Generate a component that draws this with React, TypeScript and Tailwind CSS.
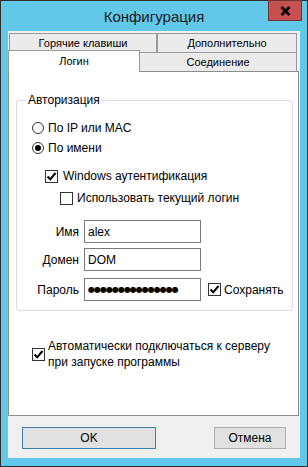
import React from "react";

const font = { fontFamily: '"Liberation Sans", Arial, sans-serif' };

function Check({ checked }: { checked: boolean }) {
  return (
    <span className="w-[13px] h-[13px] border border-[#333333] bg-white flex items-center justify-center shrink-0">
      {checked && (
        <svg width="11" height="11" viewBox="0 0 11 11">
          <path d="M1.5 5.5 L4.2 8.3 L9.5 2" fill="none" stroke="#000" strokeWidth="2" />
        </svg>
      )}
    </span>
  );
}

function Radio({ checked }: { checked: boolean }) {
  return (
    <span className="w-[12px] h-[12px] rounded-full border border-[#333333] bg-white flex items-center justify-center shrink-0">
      {checked && <span className="w-[6px] h-[6px] rounded-full bg-black" />}
    </span>
  );
}

export default function App() {
  return (
    <div
      className="w-[308px] h-[467px] bg-[#62c8ea] border border-[#2e2e2e] flex flex-col text-black"
      style={font}
    >
      <div className="h-[30px] relative flex items-center justify-center">
        <span className="text-[15px] leading-[18px] text-[#1a1a1a] mt-[1px]">Конфигурация</span>
        <div className="absolute top-[-1px] right-[5px] w-[34px] h-[21px] bg-[#c75050] border border-[#6e3434] flex items-center justify-center">
          <svg width="11" height="10" viewBox="0 0 11 10">
            <path d="M1.5 1 L9.5 9 M9.5 1 L1.5 9" stroke="#000" strokeWidth="2.6" />
          </svg>
        </div>
      </div>
      <div className="mx-[7px] mb-[8px] flex-1 bg-[#f0f0f0] flex flex-col">
        {/* tabs row 1 */}
        <div className="flex pt-[2px] pl-[1px]">
          <div className="w-[148px] h-[19px] bg-[#ebebeb] border border-[#9a9a9a] border-b-0 flex items-center justify-center text-[11px] leading-[13px]">
            Горячие клавиши
          </div>
          <div className="w-[140px] h-[19px] bg-[#ebebeb] border border-[#9a9a9a] border-b-0 flex items-center justify-center text-[11px] leading-[13px]">
            Дополнительно
          </div>
        </div>
        {/* tabs row 2 */}
        <div className="flex items-start -mt-[2px]">
          <div className="relative z-10 w-[132px] h-[22px] bg-white border border-[#9a9a9a] border-b-0 flex items-start justify-center pt-[4px] text-[11px] leading-[13px]">
            Логин
          </div>
          <div className="mt-[2px] w-[157px] h-[19px] bg-[#ebebeb] border border-[#9a9a9a] border-l-0 border-b-0 flex items-center justify-center text-[11px] leading-[13px]">
            Соединение
          </div>
        </div>
        {/* panel */}
        <div className="-mt-[1px] w-[291px] h-[345px] bg-white border border-[#8c8c8c] flex flex-col text-[12px] leading-[16px]">
          <fieldset className="mt-[20px] ml-[7px] w-[277px] border border-[#dcdcdc] rounded-[3px] pb-[9px]">
            <legend className="ml-[9px] px-[2px] text-[12px] leading-[16px]">Авторизация</legend>
            <div className="flex flex-col">
              <div className="mt-[12px] ml-[15px] flex items-center gap-[4px] h-[16px]">
                <Radio checked={false} />
                <span>По IP или MAC</span>
              </div>
              <div className="mt-[4px] ml-[15px] flex items-center gap-[4px] h-[16px]">
                <Radio checked={true} />
                <span>По имени</span>
              </div>
              <div className="mt-[12px] ml-[28px] flex items-center gap-[5px] h-[16px]">
                <Check checked={true} />
                <span>Windows аутентификация</span>
              </div>
              <div className="mt-[6px] ml-[43px] flex items-center gap-[4px] h-[16px]">
                <Check checked={false} />
                <span>Использовать текущий логин</span>
              </div>
              <div className="mt-[14px] flex items-center h-[23px]">
                <span className="w-[62px] text-right">Имя</span>
                <div className="ml-[5px] w-[117px] h-[23px] border border-[#7a7a7a] bg-white flex items-center pl-[3px]">alex</div>
              </div>
              <div className="mt-[5px] flex items-center h-[23px]">
                <span className="w-[62px] text-right">Домен</span>
                <div className="ml-[5px] w-[117px] h-[23px] border border-[#7a7a7a] bg-white flex items-center pl-[3px]">DOM</div>
              </div>
              <div className="mt-[7px] flex items-center h-[23px]">
                <span className="w-[62px] text-right">Пароль</span>
                <div className="ml-[5px] w-[117px] shrink-0 h-[23px] border border-[#7a7a7a] bg-white flex items-center pl-[3px] overflow-hidden">
                  <span className="text-[8px] leading-[10px] tracking-[-1px] whitespace-nowrap" style={{ fontFamily: '"DejaVu Sans", sans-serif' }}>
                    ●●●●●●●●●●●●●●●
                  </span>
                </div>
                <div className="ml-[7px] flex items-center gap-[3px]">
                  <Check checked={true} />
                  <span>Сохранять</span>
                </div>
              </div>
            </div>
          </fieldset>
          <div className="mt-[27px] ml-[23px] flex items-center gap-[3px]">
            <Check checked={true} />
            <span>
              Автоматически подключаться к серверу
              <br />
              при запуске программы
            </span>
          </div>
        </div>
        {/* buttons */}
        <div className="flex justify-between px-[14px] mt-[11px] text-[12px]">
          <div className="w-[134px] h-[22px] bg-[#e1e1e1] border border-[#3c7fb1] flex items-center justify-center">OK</div>
          <div className="w-[72px] h-[22px] bg-[#e1e1e1] border border-[#adadad] flex items-center justify-center">Отмена</div>
        </div>
      </div>
    </div>
  );
}
